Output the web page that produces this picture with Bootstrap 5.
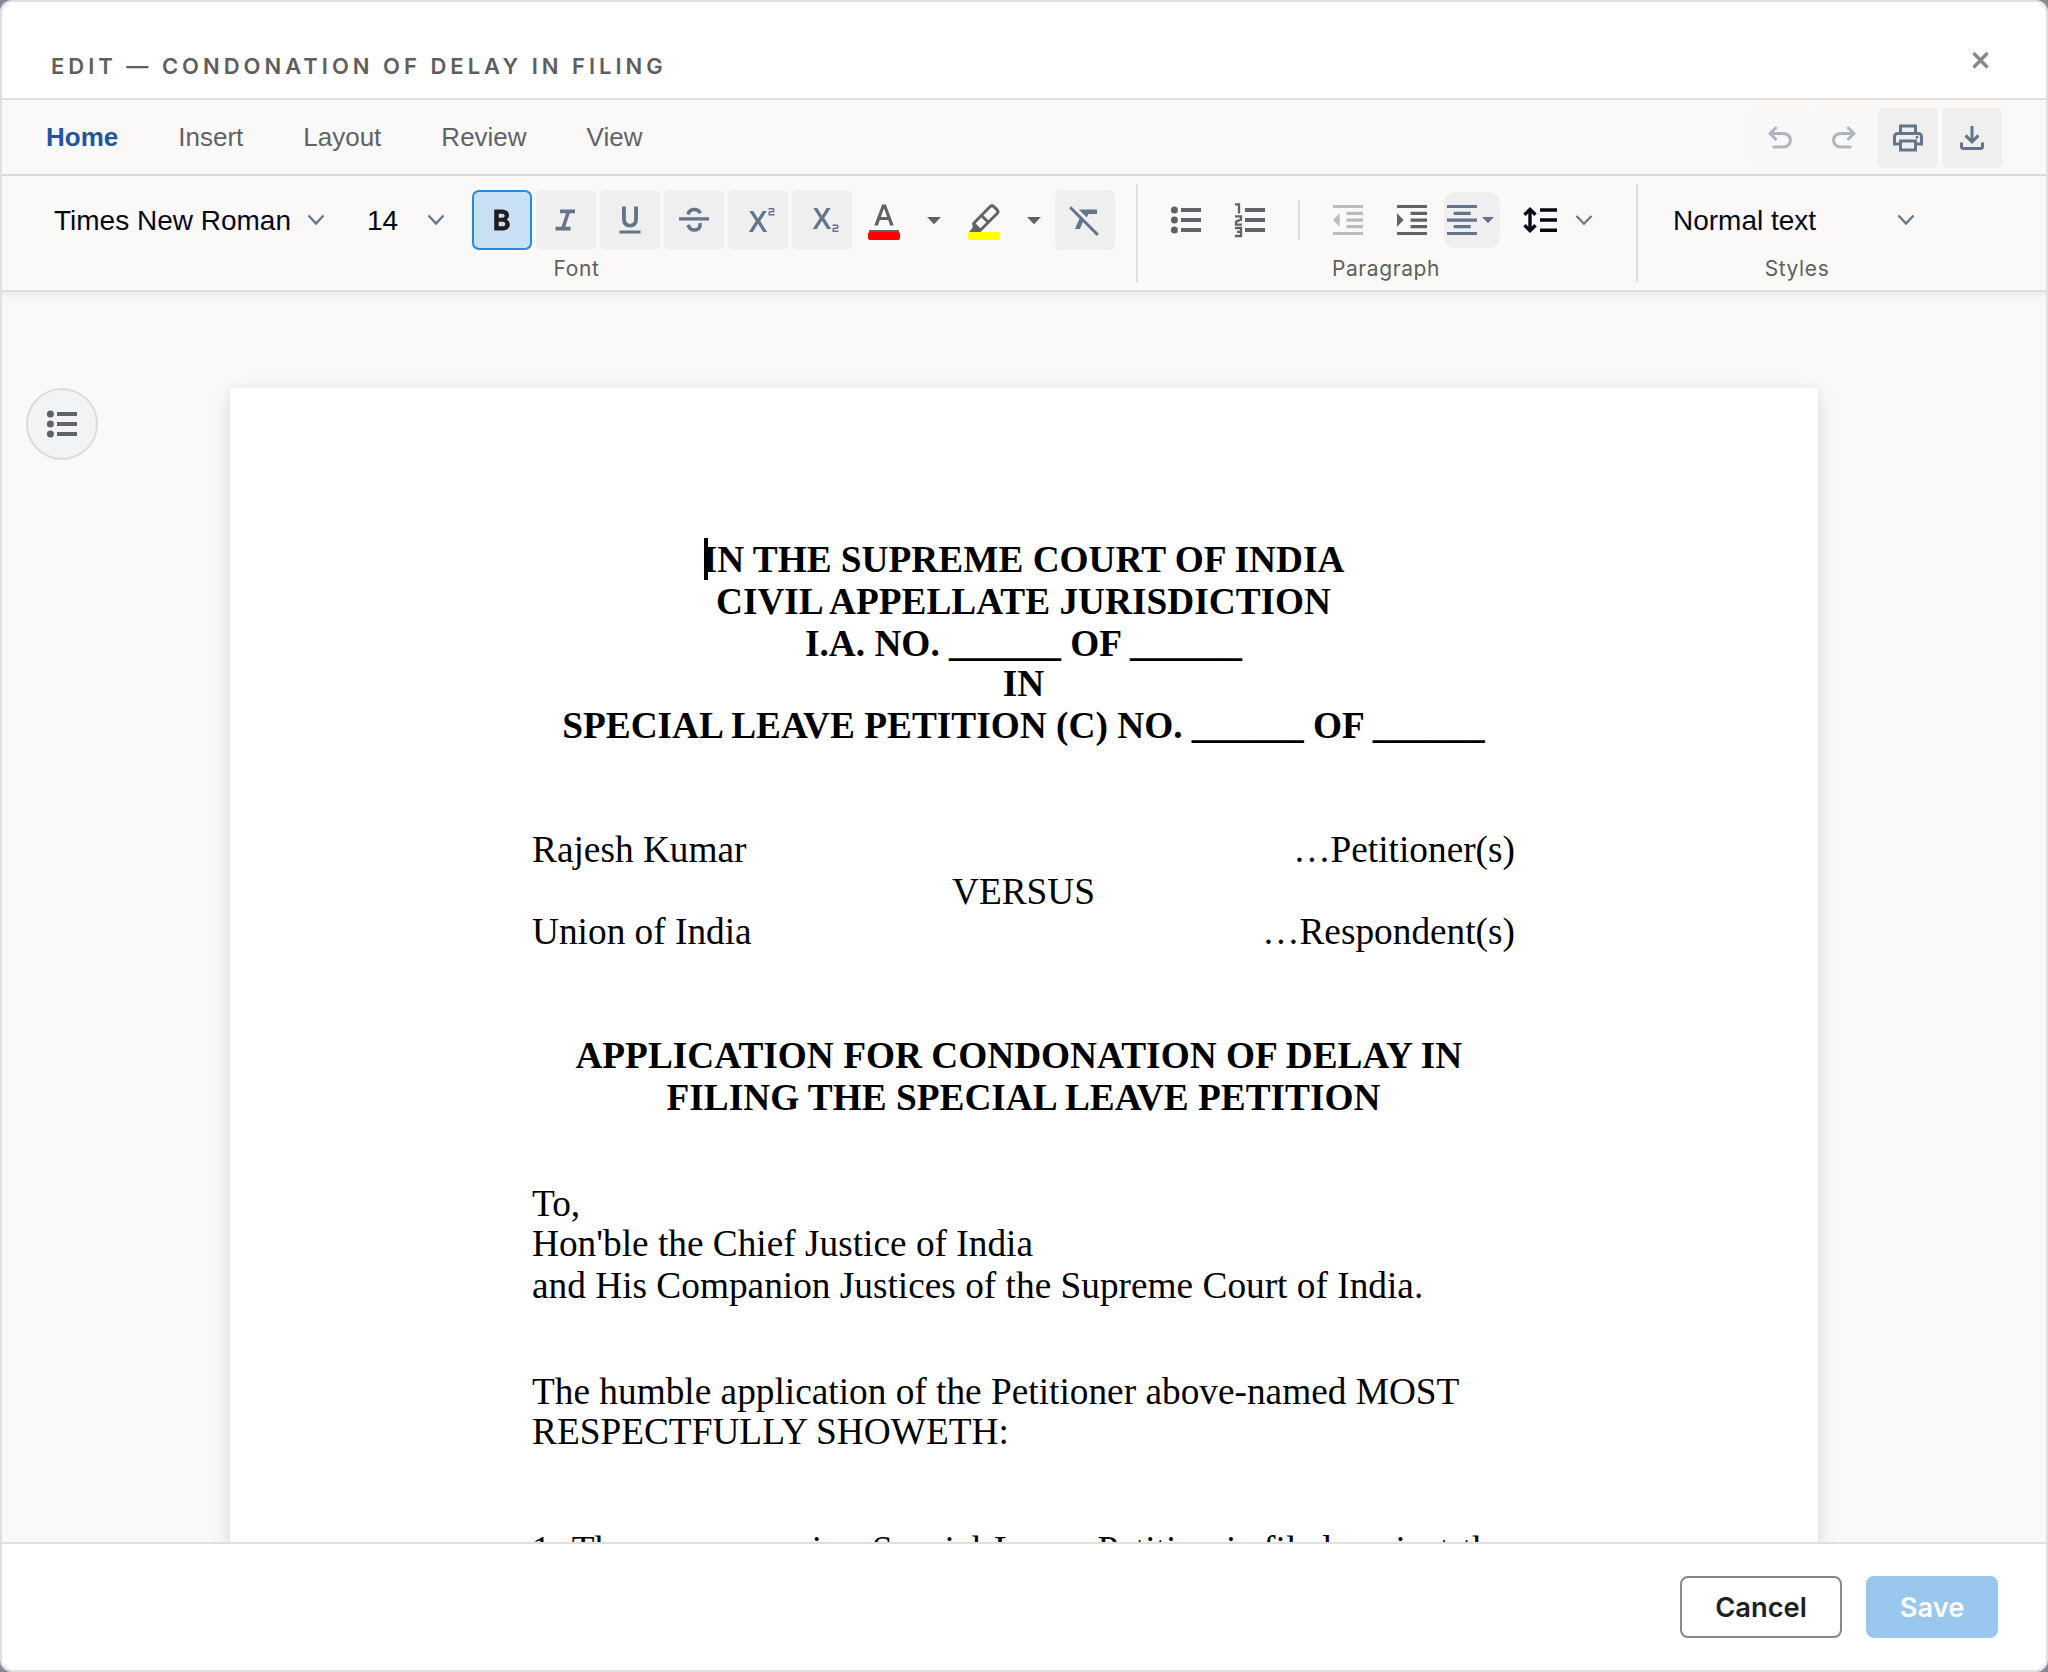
<!DOCTYPE html>
<html lang="en">
<head>
<meta charset="utf-8">
<title>Edit — Condonation of Delay in Filing</title>
<link href="https://cdn.jsdelivr.net/npm/bootstrap@5.3.0/dist/css/bootstrap.min.css" rel="stylesheet">
<style>
  body { background: #868b93; font-family: Inter, sans-serif; }
  svg { display: block; flex: none; }
  .editor { height: 1672px; border: 2px solid #e0e0e0; border-radius: 12px; background: #fff; overflow: hidden; }
  .titlebar { height: 98px; border-bottom: 2px solid #e1dfdd; padding: 0 54px 0 49px; }
  .titlebar h1 { font-size: 22px; font-weight: 600; letter-spacing: 4px; color: #605e5c; line-height: 28px; padding-top: 50px; margin: 0; }
  .close-x { margin-top: 45px; }
  .tabs { height: 76px; background: #faf9f8; border-bottom: 2px solid #e1dfdd; font: 26px/30px "Liberation Sans", sans-serif; padding: 0 44px; color: #5f6368; }
  .tab-names { gap: 60px; }
  .tab-tools { padding-top: 2px; }
  .tab-on { color: #2155a0; font-weight: 700; }
  .tool { width: 60px; height: 60px; border-radius: 6px; background: #efefef; color: #64748b; display: flex; align-items: center; justify-content: center; padding: 0; border: 0; }
  .tool.off { opacity: .5; background: #f8f8f8; }
  .tool.on { background: #c7e0f4; border: 2px solid #2b88d8; color: #201f1e; border-radius: 7px; }
  .ribbon { height: 116px; background: #faf9f8; border-bottom: 2px solid #e1dfdd; box-shadow: 0 2px 8px rgba(0,0,0,.08); position: relative; z-index: 1; padding-top: 8px; color: #5f6368; }
  .grp { height: 98px; }
  .grp + .grp { border-left: 2px solid #e1dfdd; }
  .grp-row { height: 60px; margin-top: 6px; }
  .grp-cap { font-size: 21px; line-height: 26px; letter-spacing: .6px; color: #605e5c; text-align: center; padding-top: 6px; }
  .g-font { width: 1134px; padding-left: 52px; }
  .g-font .grp-cap { margin-left: -52px; padding-left: 15px; }
  .g-para { width: 500px; padding-left: 30px; }
  .g-para .grp-cap { margin-left: -30px; padding-right: 2px; }
  .g-style { width: 320px; padding-left: 35px; }
  .g-style .grp-cap { margin-left: -35px; }
  .pick { font: 28px/32px "Liberation Sans", sans-serif; color: #020817; }
  .pick span { padding-top: 2px; }
  .pick svg { color: #64748b; }
  .w-family { width: 253px; }
  .w-size { width: 60px; }
  .w-style { width: 224px; }
  .pick-size { margin-left: 42px; }
  .fmt { margin-left: 27px; }
  .hl { margin-left: 24px; }
  .clearbtn { margin-left: 11px; }
  .alignbtn { width: 56px; height: 56px; border-radius: 12px; background: #efefef; color: #64748b; margin-left: 6px; }
  .spacing { margin-left: 20px; }
  .canvas { height: 1250px; background: #f8f9fb; overflow: hidden; padding: 96px 0 0 24px; }
  .outline-btn { width: 72px; height: 72px; border: 2px solid #dadce0; background: #f1f3f4; border-radius: 50%; color: #5f6368; }
  .sheet { width: 1588px; height: 1300px; margin-left: 132px; background: #fff; box-shadow: 0 4px 18px rgba(0,0,0,.13); padding: 151px 303px 0 302px; font: 37.32px/42px "Liberation Serif", serif; color: #000; position: relative; }
  .sheet p { margin: 0; height: 42px; white-space: nowrap; }
  .sheet .up { margin-top: -2px; }
  .caret { position: absolute; left: 474px; top: 150px; width: 4px; height: 42px; background: #000; }
  .sheet .sp-a { margin-top: 82px; }
  .sheet .sp-b { margin-top: 64px; }
  .sheet .sp-c { margin-top: 76px; word-spacing: 3px; }
  .foot { height: 128px; border-top: 2px solid #e1dfdd; padding: 32px 48px 0 0; gap: 24px; }
  .foot .btn { height: 62px; font-size: 27.3px; font-weight: 600; line-height: 30px; border-radius: 8px; padding: 2px 0 0; border-width: 2px; }
  .b-cancel { width: 162px; border-color: #8a8886; color: #201f1e; background: #fff; }
  .b-save { width: 132px; background: #99c7ee; color: #fff; border-color: #99c7ee; }
</style>
<script src="https://cdn.jsdelivr.net/npm/bootstrap@5.3.0/dist/js/bootstrap.bundle.min.js"></script>
</head>
<body>
<div class="editor d-flex flex-column">
  <header class="titlebar d-flex justify-content-between align-items-start flex-shrink-0">
    <h1>EDIT — CONDONATION OF DELAY IN FILING</h1>
    <svg class="close-x" width="24" height="24" viewBox="0 0 24 24" stroke="#8a8886" stroke-width="3.4"><path d="M5.500 6 19.500 20.500M19.500 6 5.500 20.500"/></svg>
  </header>

  <nav class="tabs d-flex align-items-center justify-content-between flex-shrink-0">
    <div class="tab-names d-flex"><span class="tab-on">Home</span><span>Insert</span><span>Layout</span><span>Review</span><span>View</span></div>
    <div class="tab-tools d-flex gap-1">
      <button class="tool off"><svg width="36" height="36" viewBox="0 0 24 24" fill="currentColor"><path d="M7 19v-2h7.1q1.575 0 2.738-1T18 13.5T16.838 11T14.1 10H7.8l2.6 2.6L9 14L4 9l5-5l1.4 1.4L7.8 8h6.3q2.425 0 4.163 1.575T20 13.5t-1.737 3.925T14.1 19z"/></svg></button>
      <button class="tool off"><svg width="36" height="36" viewBox="0 0 24 24" fill="currentColor"><path transform="matrix(-1 0 0 1 24 0)" d="M7 19v-2h7.1q1.575 0 2.738-1T18 13.5T16.838 11T14.1 10H7.8l2.6 2.6L9 14L4 9l5-5l1.4 1.4L7.8 8h6.3q2.425 0 4.163 1.575T20 13.5t-1.737 3.925T14.1 19z"/></svg></button>
      <button class="tool"><svg width="36" height="36" viewBox="0 0 24 24" fill="currentColor"><path d="M16 8V5H8v3H6V3h12v5zM18 12.5q.425 0 .713-.288T19 11.5t-.288-.712T18 10.5t-.712.288T17 11.5t.288.713t.712.287M16 19v-4H8v4zm2 2H6v-4H2v-6q0-1.275.875-2.137T5 8h14q1.275 0 2.138.863T22 11v6h-4zm2-6v-4q0-.425-.288-.712T19 10H5q-.425 0-.712.288T4 11v4h2v-2h12v2z"/></svg></button>
      <button class="tool"><svg width="36" height="36" viewBox="0 0 24 24" fill="currentColor"><path d="m12 16l-5-5l1.4-1.45l2.6 2.6V4h2v8.15l2.6-2.6L17 11zm-6 4q-.825 0-1.412-.587T4 18v-3h2v3h12v-3h2v3q0 .825-.587 1.413T18 20z"/></svg></button>
    </div>
  </nav>

  <section class="ribbon d-flex flex-shrink-0">
    <div class="grp g-font">
      <div class="grp-row d-flex align-items-center">
        <div class="pick d-flex align-items-center"><span class="w-family">Times New Roman</span>
          <svg width="18" height="12" viewBox="0 0 18 12" fill="none" stroke="currentColor" stroke-width="2.3"><path d="M1.500 1.500 9 9.500 16.500 1.500"/></svg></div>
        <div class="pick pick-size d-flex align-items-center"><span class="w-size">14</span>
          <svg width="18" height="12" viewBox="0 0 18 12" fill="none" stroke="currentColor" stroke-width="2.3"><path d="M1.500 1.500 9 9.500 16.500 1.500"/></svg></div>
        <div class="fmt d-flex gap-1">
          <button class="tool on"><svg width="36" height="36" viewBox="0 0 24 24" fill="currentColor"><path d="M6.800 19V5h5.525q1.625 0 3 1T16.700 8.775q0 1.275-.575 1.963t-1.075.987q.625.275 1.388 1.025T17.200 15q0 2.225-1.625 3.113t-3.050.887zm3.025-2.800h2.600q1.200 0 1.463-.612t.262-.888t-.262-.887t-1.538-.613H9.825zm0-5.700h2.325q.825 0 1.200-.425t.375-.950q0-.600-.425-.975t-1.100-.375H9.825z"/></svg></button>
          <button class="tool"><svg width="36" height="36" viewBox="0 0 24 24" fill="currentColor"><path d="M5 19v-2.500h4l3-9H8V5h10v2.500h-3.500l-3 9H15V19z"/></svg></button>
          <button class="tool"><svg width="36" height="36" viewBox="0 0 24 24" fill="currentColor"><path d="M5 21v-2h14v2zm7-4q-2.525 0-3.925-1.575t-1.400-4.175V3H9.250v8.400q0 1.400.700 2.275t2.050.875t2.050-.875t.700-2.275V3h2.575v8.250q0 2.600-1.400 4.175T12 17"/></svg></button>
          <button class="tool"><svg width="36" height="36" viewBox="0 0 24 24" fill="none" stroke="currentColor"><path stroke-width="2.100" d="M2 11.200h20"/><path stroke-width="2.400" d="M7.900 8.200C8.700 6 10.200 5 12.200 5c2 0 3.300.900 4 2.600M8 15.300c.8 2.300 2.200 3.400 4.300 3.400 2.500 0 4.200-1.500 3.700-4.600"/></svg></button>
          <button class="tool"><svg width="36" height="36" viewBox="0 0 24 24" fill="currentColor"><path d="M19 9V7q0-.425.288-.712T20 6h2V5h-3V4h3q.425 0 .713.288T23 5v1q0 .425-.288.713T22 7h-2v1h3v1zM5.875 20l4.625-7.275L6.200 6h2.650l3.100 5h.100l3.075-5H17.800l-4.325 6.725L18.125 20H15.450l-3.400-5.425h-.100L8.550 20z"/></svg></button>
          <button class="tool"><svg width="36" height="36" viewBox="0 0 24 24" fill="currentColor"><path d="M19 20v-2q0-.425.288-.712T20 17h2v-1h-3v-1h3q.425 0 .713.288T23 16v1q0 .425-.288.713T22 18h-2v1h3v1zM5.875 18l4.625-7.275L6.200 4h2.650l3.100 5h.100l3.075-5H17.800l-4.325 6.725L18.125 18H15.450l-3.400-5.425h-.100L8.550 18z"/></svg></button>
        </div>
        <svg class="ms-3" width="76" height="44" viewBox="868 198 76 44" fill="currentColor"><path transform="translate(866 200) scale(1.5)" d="M2 22v-2h20v2zm3.500-5L10.750 3h2.500l5.250 14h-2.400l-1.250-3.600H9.200L7.900 17zm4.400-5.600h4.200l-2.050-5.800h-.100z"/><rect x="868" y="232" width="32" height="8" rx="2" fill="#f00"/><path d="M927 217h14l-7 7.300z"/></svg>
        <svg class="hl" width="76" height="44" viewBox="968 198 76 44"><g fill="none" stroke="#5f6368" stroke-width="2.900" stroke-linejoin="round"><path d="m973.500 223.500 16.700-16.900q1.800-1.600 3.600 0l3.300 3.300q1.800 1.800 0 3.600L980.400 230.300zM981.500 215.500l7 7"/></g><path fill="#5f6368" d="M972.500 223.500 981 231.500 979 232h-10l3.500-4z"/><rect x="968" y="232" width="32" height="8" rx="2" fill="#ff0"/><path fill="#5f6368" d="M1027 217h14l-7 7.300z"/></svg>
        <button class="tool clearbtn"><svg width="36" height="36" viewBox="0 0 24 24" fill="currentColor"><path d="M13.200 10.350 10.850 8 7.850 5H20v3h-5.800zM19.800 22.600 10.600 13.400 8.600 18H5.300l3-6.900L1.400 4.200 2.800 2.800 21.200 21.200z"/></svg></button>
      </div>
      <div class="grp-cap">Font</div>
    </div>

    <div class="grp g-para">
      <div class="grp-row d-flex align-items-center">
        <svg width="100" height="40" viewBox="1168 200 100 40" fill="currentColor"><circle cx="1174.400" cy="210" r="3.500"/><circle cx="1174.400" cy="220" r="3.500"/><circle cx="1174.400" cy="230" r="3.500"/><path d="M1181 208h20v4h-20zM1181 218h20v4h-20zM1181 228h20v4h-20zM1245 208h20v4h-20zM1245 218h20v4h-20zM1245 228h20v4h-20z"/><path fill="none" stroke="currentColor" stroke-width="2.300" d="M1235 204.300h4V213.500M1235 216.300h6v3.300l-5 2v3h6M1235 228h6v8h-6M1237 231.800h4"/></svg>
        <svg width="170" height="44" viewBox="1268 198 170 44" fill="currentColor"><path fill="#e1dfdd" d="M1298 200h2v40h-2z"/><g opacity=".4"><path id="dents" d="M1333 205h30v3h-30zM1346.500 211.800h16.500v3.200h-16.500zM1346.500 218.500h16.500v3.200h-16.500zM1346.500 225h16.500v3.200h-16.500zM1333 232h30v3h-30z"/><path d="m1333 220 6.700-6.700v13.400z"/></g><use href="#dents" x="64"/><path d="m1397 213.300 6.700 6.700-6.700 6.700z"/></svg>
        <div class="alignbtn"><svg width="56" height="56" viewBox="1444 192 56 56" fill="currentColor"><path d="M1447 205h30v3h-30zM1453.700 211.800h17v3.200h-17zM1447 218.500h30v3.200h-30zM1453.700 225h17v3.200h-17zM1447 232h30v3h-30zM1482 217h12l-6 6.300z"/></svg></div>
        <svg class="spacing" width="76" height="44" viewBox="1520 198 76 44" fill="none"><g stroke="#020817" stroke-width="3.400"><path d="M1540 210h17M1540 220h17M1540 230.300h17M1530 210v20" /><path d="m1524.500 214.800 5.500-5.500 5.500 5.500M1524.500 225.200l5.500 5.500 5.500-5.500"/></g><path stroke="#64748b" stroke-width="2.300" d="m1576.500 216 7.500 7.700 7.500-7.700"/></svg>
      </div>
      <div class="grp-cap">Paragraph</div>
    </div>

    <div class="grp g-style">
      <div class="grp-row pick d-flex align-items-center"><span class="w-style">Normal text</span>
        <svg width="18" height="12" viewBox="0 0 18 12" fill="none" stroke="currentColor" stroke-width="2.300"><path d="M1.500 1.500 9 9.500 16.500 1.500"/></svg></div>
      <div class="grp-cap">Styles</div>
    </div>
  </section>

  <main class="canvas d-flex align-items-start flex-shrink-0">
    <div class="outline-btn d-flex align-items-center justify-content-center flex-shrink-0"><svg width="32" height="28" viewBox="46 410 32 28" fill="currentColor"><circle cx="50.400" cy="414" r="3.500"/><circle cx="50.400" cy="424" r="3.500"/><circle cx="50.400" cy="434" r="3.500"/><path d="M57 412h20v4H57zM57 422h20v4H57zM57 432h20v4H57z"/></svg></div>
    <article class="sheet flex-shrink-0">
      <div class="caret"></div>
      <div class="fw-bold text-center">
        <p>IN THE SUPREME COURT OF INDIA</p>
        <p>CIVIL APPELLATE JURISDICTION</p>
        <p>I.A. NO. ______ OF ______</p>
        <p class="up">IN</p>
        <p>SPECIAL LEAVE PETITION (C) NO. ______ OF ______</p>
      </div>
      <p class="sp-a d-flex justify-content-between"><span>Rajesh Kumar</span><span>…Petitioner(s)</span></p>
      <p class="text-center">VERSUS</p>
      <p class="up d-flex justify-content-between"><span>Union of India</span><span>…Respondent(s)</span></p>
      <div class="fw-bold text-center sp-a">
        <p>APPLICATION FOR CONDONATION OF DELAY IN&nbsp;</p>
        <p>FILING THE SPECIAL LEAVE PETITION</p>
      </div>
      <p class="sp-b">To,</p>
      <p class="up">Hon'ble the Chief Justice of India</p>
      <p>and His Companion Justices of the Supreme Court of India.</p>
      <p class="sp-b">The humble application of the Petitioner above-named MOST</p>
      <p class="up">RESPECTFULLY SHOWETH:</p>
      <p class="sp-c">1. The accompanying Special Leave Petition is filed against the</p>
    </article>
  </main>

  <footer class="foot d-flex justify-content-end flex-shrink-0">
    <button class="btn b-cancel">Cancel</button>
    <button class="btn b-save">Save</button>
  </footer>
</div>
</body>
</html>
